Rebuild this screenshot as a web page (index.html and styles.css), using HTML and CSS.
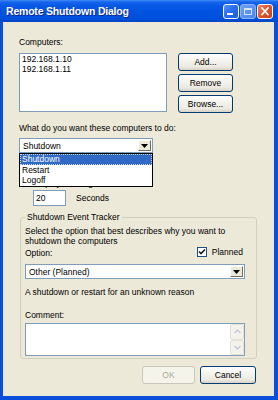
FILE: index.html
```html
<!DOCTYPE html>
<html lang="en">
<head>
  <meta charset="UTF-8">
  <meta name="viewport" content="width=device-width, initial-scale=1.0">
  <title>Remote Shutdown Dialog</title>
  <link rel="stylesheet" href="styles.css">
</head>
<body>
  <div class="window">
    <div class="titlebar">
      <span class="title">Remote Shutdown Dialog</span>
      <div class="caption-buttons">
        <span class="cap-btn">
          <svg width="14" height="13" viewBox="0 0 14 13"><rect x="3" y="8" width="6" height="2" fill="#fff"/></svg>
        </span>
        <span class="cap-btn disabled">
          <svg width="14" height="13" viewBox="0 0 14 13"><rect x="3.5" y="3.5" width="7" height="6" fill="none" stroke="#d8e4fb" stroke-width="1"/><rect x="3.5" y="3.5" width="7" height="1.5" fill="#d8e4fb"/></svg>
        </span>
        <span class="cap-btn close">
          <svg width="14" height="13" viewBox="0 0 14 13"><path d="M4 3 L10 9.5 M10 3 L4 9.5" stroke="#fff" stroke-width="1.7" stroke-linecap="square"/></svg>
        </span>
      </div>
    </div>

    <div class="client">
      <div class="label">Computers:</div>
      <div class="computers">
        <div class="listbox">
          <div>192.168.1.10</div>
          <div>192.168.1.11</div>
        </div>
        <div class="side-buttons">
          <button class="btn">Add...</button>
          <button class="btn">Remove</button>
          <button class="btn">Browse...</button>
        </div>
      </div>

      <div class="label action-label">What do you want these computers to do:</div>
      <div class="combo action-combo">
        <span class="combo-value">Shutdown</span>
        <span class="combo-arrow">
          <svg width="7" height="4" viewBox="0 0 7 4"><path d="M0 0 H7 L3.5 4 Z" fill="#000"/></svg>
        </span>
        <ul class="dropdown">
          <li class="selected">Shutdown</li>
          <li>Restart</li>
          <li>Logoff</li>
        </ul>
      </div>

      <div class="check warn-check"><span class="checkbox"></span>Warn users of the action</div>
      <div class="label indent warn-label">Display warning for</div>
      <div class="seconds-row indent">
        <span class="textbox seconds-box">20</span>
        <span class="seconds-unit">Seconds</span>
      </div>

      <fieldset class="tracker">
        <legend>Shutdown Event Tracker</legend>
        <p class="tracker-help">Select the option that best describes why you want to<br>shutdown the computers</p>
        <div class="option-row">
          <span class="option-label">Option:</span>
          <span class="check planned">
            <span class="checkbox">
              <svg width="8" height="8" viewBox="0 0 8 8"><path d="M1 3.5 L3 5.5 L7 1.5" fill="none" stroke="#1a1a1a" stroke-width="1.6"/></svg>
            </span>
            Planned
          </span>
        </div>
        <div class="combo reason-combo">
          <span class="combo-value">Other (Planned)</span>
          <span class="combo-arrow">
            <svg width="7" height="4" viewBox="0 0 7 4"><path d="M0 0 H7 L3.5 4 Z" fill="#000"/></svg>
          </span>
        </div>
        <div class="reason-desc">A shutdown or restart for an unknown reason</div>
        <div class="comment-label">Comment:</div>
        <div class="textbox comment-box">
          <div class="scroll">
            <span class="scroll-btn">
              <svg width="7" height="5" viewBox="0 0 7 5"><path d="M0.5 4 L3.5 1 L6.5 4" fill="none" stroke="#c3c8d4" stroke-width="1.3"/></svg>
            </span>
            <span class="scroll-btn">
              <svg width="7" height="5" viewBox="0 0 7 5"><path d="M0.5 1 L3.5 4 L6.5 1" fill="none" stroke="#c3c8d4" stroke-width="1.3"/></svg>
            </span>
          </div>
        </div>
      </fieldset>

      <div class="dialog-buttons">
        <button class="btn ok" disabled>OK</button>
        <button class="btn cancel">Cancel</button>
      </div>
    </div>
  </div>
</body>
</html>
```

FILE: styles.css
```css
* {
  box-sizing: border-box;
}

body {
  margin: 0;
  font-family: "Liberation Sans", Arial, sans-serif;
  font-size: 8.5px;
  color: #000;
  background: #fff;
}

.window {
  width: 278px;
  height: 400px;
  display: flex;
  flex-direction: column;
  background: #0a4edc;
}

/* title bar */
.titlebar {
  height: 22px;
  flex: none;
  display: flex;
  align-items: center;
  padding: 0 5px 0 6px;
  background: linear-gradient(#3d8df7 0, #1865ec 2px, #0758e6 6px, #0053e1 50%, #0050db 85%, #0045c4 100%);
}

.title {
  color: #fff;
  font-weight: bold;
  font-size: 10.5px;
  letter-spacing: -0.2px;
  text-shadow: 1px 1px 0 #0c2a8a;
}

.caption-buttons {
  margin-left: auto;
  display: flex;
  gap: 1px;
}

.cap-btn {
  width: 16px;
  height: 15px;
  border: 1px solid #fff;
  border-radius: 3px;
  display: flex;
  align-items: center;
  justify-content: center;
  background: linear-gradient(135deg, #5a93f5 0, #2c6ff0 45%, #1d5ce0 100%);
}

.cap-btn.disabled {
  border-color: #8fb2f5;
  background: linear-gradient(135deg, #6d9ff3 0, #4c87ee 100%);
}

.cap-btn.close {
  background: linear-gradient(135deg, #f08a65 0, #e0552d 45%, #c9401b 100%);
}

/* client area */
.client {
  flex: 1;
  margin: 0 4px 4px 3px;
  padding: 15px 18px 0 16px;
  background: #ece9d8;
}

.label {
  line-height: 11px;
}

.indent {
  margin-left: 14px;
}

.computers {
  display: flex;
  align-items: flex-start;
  margin-top: 5px;
}

.listbox {
  width: 148px;
  height: 59px;
  background: #fff;
  border: 1px solid #7f9db9;
  padding: 0 2px;
  line-height: 10px;
}

.side-buttons {
  display: flex;
  flex-direction: column;
  gap: 3px;
  margin-left: 11px;
}

.btn {
  width: 55px;
  height: 18px;
  padding: 0;
  font-family: inherit;
  font-size: 8.5px;
  color: #000;
  border: 1px solid #003c74;
  border-radius: 3px;
  background: linear-gradient(#fff 0, #f4f3ee 40%, #ebe9e0 80%, #d7d2c4 100%);
}

.btn:disabled {
  color: #aca899;
  border-color: #c9c7ba;
  background: #f5f4ea;
}

.action-label {
  margin-top: 10px;
}

.combo {
  position: relative;
  display: flex;
  align-items: center;
  height: 15px;
  padding: 1px 1px 1px 3px;
  background: #fff;
  border: 1px solid #7f9db9;
}

.combo-arrow {
  margin-left: auto;
  width: 13px;
  height: 11px;
  display: flex;
  align-items: center;
  justify-content: center;
  background: #ece9d8;
  border: 1px solid;
  border-color: #fff #716f64 #716f64 #fff;
}

.action-combo {
  width: 134px;
  margin-top: 4px;
}

.dropdown {
  position: absolute;
  top: 14px;
  left: -1px;
  width: 134px;
  margin: 0;
  padding: 0;
  list-style: none;
  background: #fff;
  border: 1px solid #000;
  z-index: 2;
}

.dropdown li {
  height: 10.5px;
  line-height: 10.5px;
  padding-left: 2px;
}

.dropdown li.selected {
  background: #316ac5;
  color: #fff;
  outline: 1px dotted #c9d8f0;
  outline-offset: -1px;
}

.check {
  display: flex;
  align-items: center;
  line-height: 11px;
}

.checkbox {
  width: 10px;
  height: 10px;
  margin-right: 5px;
  display: flex;
  align-items: center;
  justify-content: center;
  background: #fff;
  border: 1px solid #1c5180;
}

.warn-check {
  margin-top: 8px;
}

.warn-label {
  margin-top: 6px;
}

.seconds-row {
  display: flex;
  align-items: center;
  margin-top: 1px;
}

.textbox {
  background: #fff;
  border: 1px solid #7f9db9;
}

.seconds-box {
  width: 33px;
  height: 16px;
  padding-left: 2px;
  line-height: 14px;
}

.seconds-unit {
  margin-left: 10px;
}

/* event tracker group */
.tracker {
  width: 237px;
  margin: 6px -1px 0 1px;
  padding: 3px 4px 2px;
  border: 1px solid #d0d0bf;
  border-radius: 3px;
}

.tracker legend {
  padding: 0 2px;
  line-height: 11px;
}

.tracker-help {
  margin: 0;
  line-height: 10px;
}

.option-row {
  display: flex;
  align-items: flex-start;
  height: 12px;
  padding-right: 9px;
}

.option-label {
  margin-top: 2px;
  line-height: 10px;
}

.planned {
  margin-left: auto;
  line-height: 10px;
}

.planned .checkbox {
  width: 10px;
  height: 10px;
  margin-top: 1px;
}

.reason-combo {
  width: 220px;
  margin-top: 6px;
}

.reason-desc {
  margin-top: 8px;
  line-height: 10px;
}

.comment-label {
  margin-top: 13px;
  line-height: 10px;
}

.comment-box {
  width: 220px;
  height: 33px;
  margin-top: 3px;
  display: flex;
  justify-content: flex-end;
}

.scroll {
  display: flex;
  flex-direction: column;
  width: 14px;
}

.scroll-btn {
  flex: 1;
  display: flex;
  align-items: center;
  justify-content: center;
  background: #f3f2ec;
  border: 1px solid #e4e2d8;
  border-radius: 2px;
}

.dialog-buttons {
  display: flex;
  justify-content: flex-end;
  gap: 5px;
  margin-top: 7px;
}

.dialog-buttons .ok {
  width: 53px;
}

.dialog-buttons .cancel {
  width: 56px;
}
```
